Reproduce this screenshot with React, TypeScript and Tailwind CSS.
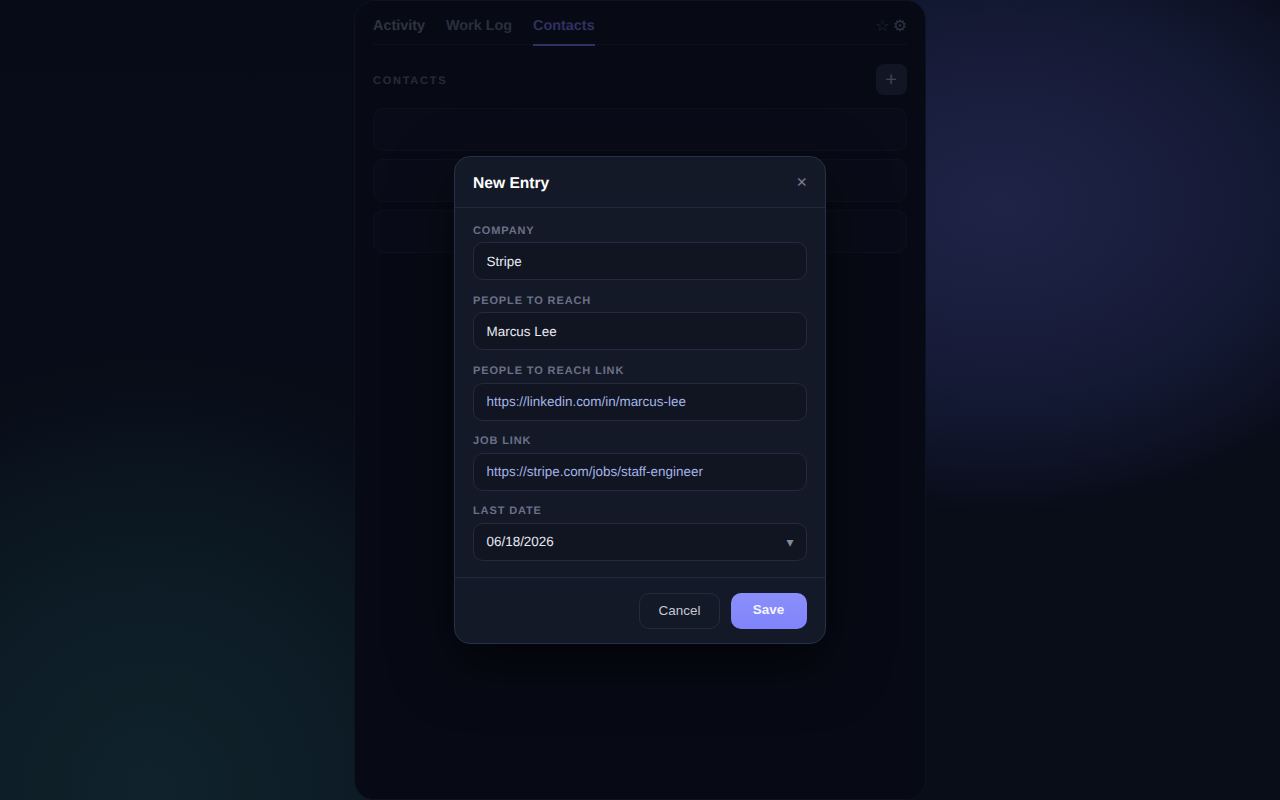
import React from "react";

const fields = [
  { label: "COMPANY", value: "Stripe", link: false },
  { label: "PEOPLE TO REACH", value: "Marcus Lee", link: false },
  { label: "PEOPLE TO REACH LINK", value: "https://linkedin.com/in/marcus-lee", link: true },
  { label: "JOB LINK", value: "https://stripe.com/jobs/staff-engineer", link: true },
];

function Field({ label, value, link, arrow }: { label: string; value: string; link?: boolean; arrow?: boolean }) {
  return (
    <div className="flex flex-col">
      <label className="h-[13px] text-[11px] leading-[13px] font-bold tracking-[0.88px] text-[#6b7086] mb-[4.4px]">{label}</label>
      <div className="relative h-[38px] rounded-[10px] border border-[#252a40] bg-[#101521] pl-[12.5px] pr-3 pt-px flex items-center">
        <span className={"text-[13.44px] leading-[18px] " + (link ? "text-[#a4b4e6]" : "text-[#e8ebf3]")}>{value}</span>
        {arrow && <span className="absolute right-[12.5px] top-[9.5px] text-[14px] leading-[18px] text-[#858a9b]">▾</span>}
      </div>
    </div>
  );
}

export default function App() {
  return (
    <div className="relative h-screen w-full overflow-hidden font-['Liberation_Sans',Arial,sans-serif] bg-[#090d18] [text-rendering:geometricPrecision]">
      <div className="absolute inset-0 bg-[radial-gradient(ellipse_430px_310px_at_1000px_205px,#1f2346_0%,#191d3c_40%,#121730_70%,rgba(9,13,24,0)_100%),radial-gradient(ellipse_420px_430px_at_150px_790px,#10232c_0%,#0c1a24_55%,rgba(9,13,24,0)_100%),linear-gradient(180deg,#070b17_0%,#090d18_100%)]" />
      <div className="relative mx-auto w-[572px] h-[800px] rounded-[20px] border border-[#0e1222] bg-[#070a15] px-[18px] pt-[5px] flex flex-col">
        <div className="flex items-center justify-between h-[39px] border-b border-[#0d101b]">
          <div className="flex gap-[21px] h-full">
            <span className="text-[14.4px] leading-[40px] font-bold text-[#30343f]">Activity</span>
            <span className="text-[14.4px] leading-[40px] font-bold text-[#2a2e3f]">Work Log</span>
            <span className="text-[14.4px] leading-[40px] font-bold text-[#2f3160] border-b-2 border-[#2f3160] h-[40px]">Contacts</span>
          </div>
          <div className="flex items-center gap-[3px] text-[#23283a] text-[16px] mt-[3px]">
            <span>☆</span>
            <span className="text-[#2e3244]">⚙</span>
          </div>
        </div>
        <div className="flex items-center justify-between mt-[19px] h-[31px]">
          <span className="text-[11px] font-bold tracking-[1.75px] text-[#272a39] pt-[4px]">CONTACTS</span>
          <div className="w-[31px] h-[31px] rounded-[8px] bg-[#121624] flex items-center justify-center text-[20px] font-light text-[#40455a] pr-[1px]">+</div>
        </div>
        <div className="flex flex-col gap-[8px] mt-[13px]">
          <div className="h-[43px] rounded-[10px] border border-[#0d1020] bg-[#090c18]" />
          <div className="h-[43px] rounded-[10px] border border-[#0d1020] bg-[#090c18]" />
          <div className="h-[43px] rounded-[10px] border border-[#0d1020] bg-[#090c18]" />
        </div>
      </div>
      <div className="absolute inset-0 flex items-center justify-center">
        <div className="w-[372px] h-[488px] rounded-[16px] border border-[#2a2f47] bg-[#141927] shadow-[0_20px_60px_rgba(0,0,0,0.6)] flex flex-col">
          <div className="h-[51px] border-b border-[#232840] px-[18px] flex items-center justify-between">
            <span className="text-[15.6px] font-bold text-white mt-[4px]">New Entry</span>
            <span className="text-[18px] text-[#787e90]">×</span>
          </div>
          <div className="flex-1 px-[18px] pt-[17px] flex flex-col gap-[14.7px]">
            {fields.map((f) => (
              <Field key={f.label} {...f} />
            ))}
            <Field label="LAST DATE" value="06/18/2026" arrow />
          </div>
          <div className="h-[66px] border-t border-[#232840] px-[18px] pt-[15px] flex justify-end gap-[11px]">
            <button className="w-[81px] h-[36px] rounded-[10px] border border-[#252a40] text-[13.44px] text-[#c5c9d6]">Cancel</button>
            <button className="w-[76px] h-[36px] rounded-[10px] bg-[linear-gradient(180deg,#8b8ffa,#7f84fb)] text-[13.44px] font-bold text-[#f5f5ff] pb-[2px] pr-[1px]">Save</button>
          </div>
        </div>
      </div>
    </div>
  );
}
